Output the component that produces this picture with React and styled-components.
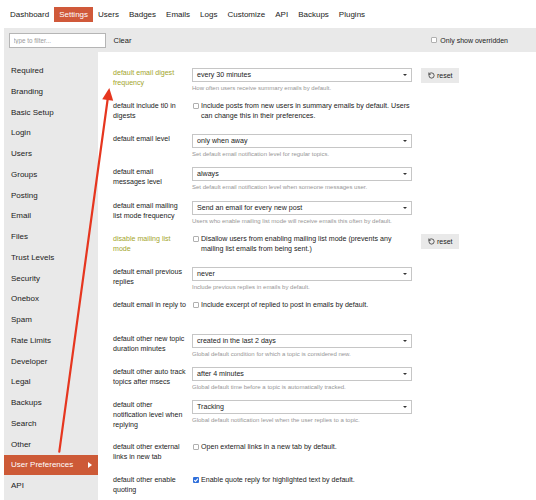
import React from 'react';
import styled, { createGlobalStyle } from 'styled-components';
import { RotateCcw } from 'lucide-react';

const GlobalStyle = createGlobalStyle`
  body {
    margin: 0;
    background: #ffffff;
    font-family: "Liberation Sans", Arial, Helvetica, sans-serif;
    color: #222222;
  }
`;

const navItems = ['Dashboard', 'Settings', 'Users', 'Badges', 'Emails', 'Logs', 'Customize', 'API', 'Backups', 'Plugins'];

const categories = [
  'Required', 'Branding', 'Basic Setup', 'Login', 'Users', 'Groups', 'Posting', 'Email', 'Files',
  'Trust Levels', 'Security', 'Onebox', 'Spam', 'Rate Limits', 'Developer', 'Legal', 'Backups',
  'Search', 'Other', 'User Preferences', 'API',
];

const settings = [
  { label: 'default email digest frequency', overridden: true, value: 'every 30 minutes', help: 'How often users receive summary emails by default.', reset: true },
  { label: 'default include tl0 in digests', checkbox: true, text: 'Include posts from new users in summary emails by default. Users can change this in their preferences.' },
  { label: 'default email level', value: 'only when away', help: 'Set default email notification level for regular topics.' },
  { label: 'default email messages level', value: 'always', help: 'Set default email notification level when someone messages user.' },
  { label: 'default email mailing list mode frequency', value: 'Send an email for every new post', help: 'Users who enable mailing list mode will receive emails this often by default.' },
  { label: 'disable mailing list mode', overridden: true, checkbox: true, text: 'Disallow users from enabling mailing list mode (prevents any mailing list emails from being sent.)', reset: true },
  { label: 'default email previous replies', value: 'never', help: 'Include previous replies in emails by default.' },
  { label: 'default email in reply to', checkbox: true, text: 'Include excerpt of replied to post in emails by default.' },
  { label: 'default other new topic duration minutes', value: 'created in the last 2 days', help: 'Global default condition for which a topic is considered new.' },
  { label: 'default other auto track topics after msecs', value: 'after 4 minutes', help: 'Global default time before a topic is automatically tracked.' },
  { label: 'default other notification level when replying', value: 'Tracking', help: 'Global default notification level when the user replies to a topic.' },
  { label: 'default other external links in new tab', checkbox: true, text: 'Open external links in a new tab by default.' },
  { label: 'default other enable quoting', checkbox: true, checked: true, text: 'Enable quote reply for highlighted text by default.' },
];

const App = () => {
  return (
    <Page>
      <GlobalStyle />
      <Nav>
        {navItems.map((item) => (
          <NavItem key={item} $active={item === 'Settings'}>{item}</NavItem>
        ))}
      </Nav>
      <FilterBar>
        <FilterInput placeholder="type to filter..." />
        <ClearLink>Clear</ClearLink>
        <Spacer />
        <OverriddenToggle>
          <Box />
          Only show overridden
        </OverriddenToggle>
      </FilterBar>
      <Body>
        <Sidebar>
          {categories.map((cat, i) => (
            <SideItem key={i} $active={cat === 'User Preferences'}>
              {cat}
              {cat === 'User Preferences' && <Pointer />}
            </SideItem>
          ))}
        </Sidebar>
        <Main>
          {settings.map((s) => (
            <Row key={s.label}>
              <Label $overridden={s.overridden}>{s.label}</Label>
              <Control>
                {s.checkbox ? (
                  <CheckRow>
                    <Box $checked={s.checked}>
                      {s.checked && (
                        <svg width="6" height="6" viewBox="0 0 6 6">
                          <path d="M1.2 3.1 L2.5 4.4 L4.9 1.6" fill="none" stroke="#fff" strokeWidth="1.1" />
                        </svg>
                      )}
                    </Box>
                    <CheckText>{s.text}</CheckText>
                  </CheckRow>
                ) : (
                  <>
                    <Select>
                      {s.value}
                      <Caret />
                    </Select>
                    <Help>{s.help}</Help>
                  </>
                )}
              </Control>
              {s.reset && (
                <ResetButton>
                  <RotateCcw size={7} strokeWidth={2.4} />
                  reset
                </ResetButton>
              )}
            </Row>
          ))}
        </Main>
      </Body>
      <Annotation width="536" height="500" viewBox="0 0 536 500">
        <line x1="59.3" y1="451.7" x2="107.7" y2="99" stroke="#e6361f" strokeWidth="2.2" strokeLinecap="round" />
        <polygon points="109.3,88 113.2,100.7 102.2,99.2" fill="#e6361f" />
      </Annotation>
    </Page>
  );
};

export default App;

const Page = styled.div`
  position: relative;
  width: 536px;
  height: 500px;
  overflow: hidden;
  background: #ffffff;
`;

const Nav = styled.div`
  display: flex;
  padding: 7px 0 6px 5px;
`;

const NavItem = styled.div`
  padding: 0 5px;
  height: 15px;
  line-height: 15px;
  font-size: 8px;
  color: ${(p) => (p.$active ? '#ffffff' : '#222222')};
  background: ${(p) => (p.$active ? '#d0593a' : 'transparent')};
`;

const FilterBar = styled.div`
  display: flex;
  align-items: center;
  height: 24px;
  margin-left: 4px;
  padding: 0 28px 0 4.5px;
  background: #e9e9e9;
`;

const FilterInput = styled.input`
  box-sizing: border-box;
  width: 97px;
  height: 15px;
  margin: 0;
  padding: 0 4px;
  border: 1px solid #b5b5b5;
  background: #ffffff;
  font-family: "Liberation Sans", Arial, sans-serif;
  font-size: 6.3px;
  outline: none;
  &::placeholder {
    color: #9a9a9a;
  }
`;

const ClearLink = styled.span`
  margin-left: 8px;
  font-size: 7.5px;
  color: #222222;
`;

const Spacer = styled.div`
  flex: 1;
`;

const OverriddenToggle = styled.label`
  display: flex;
  align-items: center;
  gap: 3px;
  font-size: 7px;
  color: #222222;
`;

const Body = styled.div`
  display: flex;
  height: 448px;
`;

const Sidebar = styled.div`
  box-sizing: border-box;
  width: 94px;
  margin-left: 4px;
  padding-top: 8.5px;
  background: #e9e9e9;
`;

const SideItem = styled.div`
  display: flex;
  align-items: center;
  justify-content: space-between;
  height: 20px;
  margin-bottom: 0.75px;
  padding: 0 6px 0 7px;
  font-size: 8px;
  color: ${(p) => (p.$active ? '#ffffff' : '#222222')};
  background: ${(p) => (p.$active ? '#cd5a37' : 'transparent')};
`;

const Pointer = styled.span`
  width: 0;
  height: 0;
  border-top: 3.5px solid transparent;
  border-bottom: 3.5px solid transparent;
  border-left: 4px solid #ffffff;
`;

const Main = styled.div`
  flex: 1;
  padding: 15.5px 0 0 15px;
`;

const Row = styled.div`
  display: grid;
  grid-template-columns: 74px 220px auto;
  column-gap: 5px;
  align-items: start;
  justify-items: start;
  min-height: 24px;
  margin-bottom: 9.25px;
`;

const Label = styled.div`
  padding-bottom: 2.5px;
  font-size: 7.1px;
  line-height: 10px;
  color: ${(p) => (p.$overridden ? '#a3a52c' : '#222222')};
`;

const Control = styled.div`
  display: flex;
  flex-direction: column;
  width: 100%;
`;

const Select = styled.div`
  box-sizing: border-box;
  display: flex;
  align-items: center;
  justify-content: space-between;
  height: 14px;
  padding: 0 4px;
  border: 1px solid #c6c6c6;
  font-size: 7.1px;
  color: #222222;
`;

const Caret = styled.span`
  width: 0;
  height: 0;
  border-left: 2px solid transparent;
  border-right: 2px solid transparent;
  border-top: 2.5px solid #333333;
`;

const Help = styled.div`
  margin-top: 2px;
  font-size: 6px;
  line-height: 8px;
  color: #969696;
  white-space: nowrap;
`;

const CheckRow = styled.label`
  display: flex;
  align-items: flex-start;
  gap: 2px;
  padding-left: 1px;
`;

const Box = styled.span`
  box-sizing: border-box;
  display: flex;
  align-items: center;
  justify-content: center;
  flex-shrink: 0;
  width: 6px;
  height: 6px;
  margin-top: 2px;
  border: ${(p) => (p.$checked ? 'none' : '1px solid #b0b0b0')};
  border-radius: 1px;
  background: ${(p) => (p.$checked ? '#2f6fdb' : '#ffffff')};

  ${OverriddenToggle} & {
    margin-top: 0;
  }
`;

const CheckText = styled.span`
  font-size: 7.1px;
  line-height: 10px;
  color: #222222;
`;

const ResetButton = styled.button`
  display: flex;
  align-items: center;
  gap: 2px;
  height: 14.5px;
  margin: 0.5px 0 0 4px;
  padding: 0 6px 0 7px;
  border: none;
  background: #e9e9e9;
  font-family: "Liberation Sans", Arial, sans-serif;
  font-size: 7px;
  color: #222222;
`;

const Annotation = styled.svg`
  position: absolute;
  top: 0;
  left: 0;
  pointer-events: none;
`;
